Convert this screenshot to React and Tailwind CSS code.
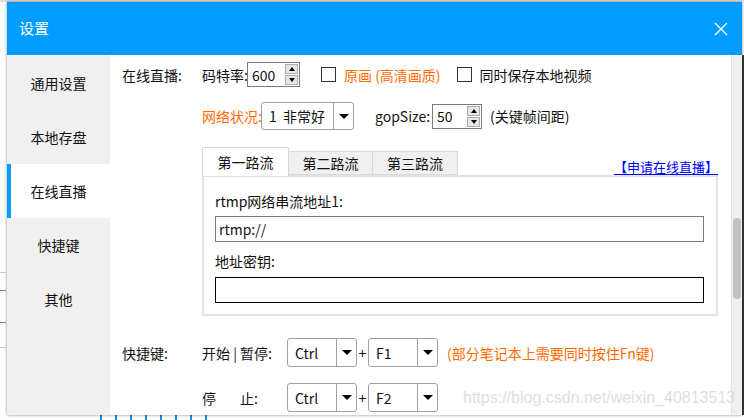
import React from "react";

// Dialog "设置" - tab 在线直播

function Spin({ value, w }) {
  return (
    <div
      className="flex shrink-0 items-center h-[25px] border border-[#7a7a7a] bg-white"
      style={{ width: w }}
    >
      <span className="flex-1 pl-[4px] text-[14px] leading-none">{value}</span>
      <div className="flex flex-col w-[13px] mr-[1px] gap-[1px]">
        <div className="h-[10px] border border-[#adadad] bg-[#e6e6e6] flex items-center justify-center">
          <div className="w-0 h-0 border-l-[3px] border-r-[3px] border-b-[4px] border-l-transparent border-r-transparent border-b-black" />
        </div>
        <div className="h-[10px] border border-[#adadad] bg-[#e6e6e6] flex items-center justify-center">
          <div className="w-0 h-0 border-l-[3px] border-r-[3px] border-t-[4px] border-l-transparent border-r-transparent border-t-black" />
        </div>
      </div>
    </div>
  );
}

function Combo({ value, w, h = 29 }) {
  return (
    <div
      className="flex shrink-0 rounded-[3px] border border-[#a0a0a0] bg-white"
      style={{ width: w, height: h }}
    >
      <span className="flex-1 pl-[7px] flex items-center text-[14px] whitespace-pre">{value}</span>
      <div className="w-[20px] border-l border-[#a0a0a0] flex items-center justify-center">
        <div className="w-0 h-0 border-l-[5px] border-r-[5px] border-t-[5px] border-l-transparent border-r-transparent border-t-black" />
      </div>
    </div>
  );
}

function Check({ label, orange }) {
  return (
    <div className="flex items-center gap-[8px]">
      <div className="w-[15px] h-[15px] border border-[#333] bg-white" />
      <span className={orange ? "text-[#ff6a00]" : "text-[#111]"}>{label}</span>
    </div>
  );
}

const menu = ["通用设置", "本地存盘", "在线直播", "快捷键", "其他"];

export default function App() {
  return (
    <div className="relative w-[744px] h-[420px] overflow-hidden bg-white whitespace-nowrap font-['Noto_Sans_CJK_SC','Microsoft_YaHei',sans-serif] text-[14px] text-[#111]">
      {/* 背后窗口的一点残影 */}
      <div className="absolute left-0 top-0 w-full h-[2px] bg-[#dcdcdc]" />
      <div className="absolute left-0 top-[272px] w-[6px] h-[1px] bg-[#c8c8c8]" />
      <div className="absolute left-0 top-[290px] w-[6px] h-[1px] bg-[#8a8a8a]" />
      <div className="absolute left-0 top-[322px] w-[6px] h-[1px] bg-[#8a8a8a]" />
      <div className="absolute left-0 top-[347px] w-[6px] h-[1px] bg-[#c8c8c8]" />
      <div className="absolute right-0 top-[55px] w-[2px] h-[360px] bg-[#3a3a3a]" />
      <div className="absolute left-[100px] bottom-0 flex gap-[13px]">
        {[0, 1, 2, 3, 4, 5, 6, 7].map((i) => (
          <div key={i} className="w-[2px] h-[5px] bg-[#1a8fe0]" />
        ))}
      </div>

      {/* 对话框 */}
      <div className="absolute left-[7px] top-[2px] w-[735px] h-[413px] flex flex-col bg-white shadow-[0_0_3px_rgba(0,0,0,0.45)]">
        <div className="h-[53px] shrink-0 bg-[#009cff] flex items-center justify-between pl-[12px] pr-[14px] text-white">
          <span className="text-[15px]">设置</span>
          <svg width="14" height="14" viewBox="0 0 14 14">
            <path d="M1 1L13 13M13 1L1 13" stroke="white" strokeWidth="1.4" />
          </svg>
        </div>

        <div className="flex flex-1 min-h-0">
          {/* 左侧菜单 */}
          <div className="w-[103px] shrink-0 bg-[#f0f0f0] flex flex-col pt-[1px]">
            {menu.map((m) => (
              <div
                key={m}
                className={`h-[54px] flex items-center justify-center relative ${
                  m === "在线直播" ? "bg-white" : ""
                }`}
              >
                {m === "在线直播" && (
                  <div className="absolute left-0 top-0 w-[4px] h-full bg-[#009cff]" />
                )}
                {m}
              </div>
            ))}
          </div>

          {/* 内容 */}
          <div className="flex-1 min-w-0 pl-[12px] pt-[7px] leading-none">
            <div className="flex items-center h-[25px]">
              <span className="w-[80px] shrink-0">在线直播:</span>
              <span className="w-[45px] shrink-0">码特率:</span>
              <Spin value="600" w={53} />
              <div className="ml-[21px]">
                <Check label="原画 (高清画质)" orange />
              </div>
              <div className="ml-[16px]">
                <Check label="同时保存本地视频" />
              </div>
            </div>

            <div className="flex items-center h-[28px] mt-[15px] pl-[80px]">
              <span className="w-[59px] shrink-0 text-[#ff6a00]">网络状况:</span>
              <Combo value="1  非常好" w={93} h={28} />
              <span className="ml-[21px] w-[57px] shrink-0">gopSize:</span>
              <Spin value="50" w={50} />
              <span className="ml-[8px]">(关键帧间距)</span>
            </div>

            {/* 路流 tabs */}
            <div className="ml-[80px] mt-[17px] w-[516px]">
              <div className="flex items-end h-[28px] relative">
                <div className="w-[87px] h-[29px] bg-white border border-b-0 border-[#d9d9d9] flex items-center justify-center relative z-10 mb-[-1px]">
                  第一路流
                </div>
                <div className="w-[84px] h-[24px] bg-[#f0f0f0] border border-l-0 border-[#d9d9d9] flex items-center justify-center">
                  第二路流
                </div>
                <div className="w-[85px] h-[24px] bg-[#f0f0f0] border border-l-0 border-[#d9d9d9] flex items-center justify-center">
                  第三路流
                </div>
                <span className="ml-auto mb-[2px] text-[13px] text-[#0000ff] underline underline-offset-2">
                  【申请在线直播】
                </span>
              </div>
              <div className="h-[141px] border-2 border-[#e3e3e3] px-[11px] pt-[17px]">
                <div>rtmp网络串流地址1:</div>
                <div className="mt-[8px] h-[26px] w-[489px] border border-[#7a7a7a] flex items-center pl-[3px]">
                  rtmp://
                </div>
                <div className="mt-[12px]">地址密钥:</div>
                <div className="mt-[9px] h-[26px] w-[489px] border border-black" />
              </div>
            </div>

            {/* 快捷键 */}
            <div className="flex items-center h-[29px] mt-[22px]">
              <span className="w-[80px] shrink-0">快捷键:</span>
              <span className="w-[85px] shrink-0">开始 | 暂停:</span>
              <Combo value="Ctrl" w={70} />
              <span className="w-[11px] shrink-0 text-center">+</span>
              <Combo value="F1" w={70} />
              <span className="ml-[9px] text-[#ff6a00]">(部分笔记本上需要同时按住Fn键)</span>
            </div>
            <div className="flex items-center h-[29px] mt-[16px]">
              <span className="w-[80px] shrink-0" />
              <span className="w-[38px] shrink-0">停</span>
              <span className="w-[47px] shrink-0">止:</span>
              <Combo value="Ctrl" w={70} />
              <span className="w-[11px] shrink-0 text-center">+</span>
              <Combo value="F2" w={70} />
            </div>
          </div>

          {/* 滚动条 */}
          <div className="w-[11px] shrink-0 bg-[#f0f0f0] border-l border-[#e2e2e2] pt-[163px] flex justify-center">
            <div className="w-[8px] h-[81px] rounded-[4px] bg-[#c2c2c2]" />
          </div>
        </div>
      </div>

      {/* 水印 */}
      <div className="absolute left-[463px] top-[386px] text-[16px] font-['Liberation_Sans',sans-serif] text-[#d8d8d8] opacity-80 pointer-events-none">
        https://blog.csdn.net/weixin_40813513
      </div>
    </div>
  );
}
